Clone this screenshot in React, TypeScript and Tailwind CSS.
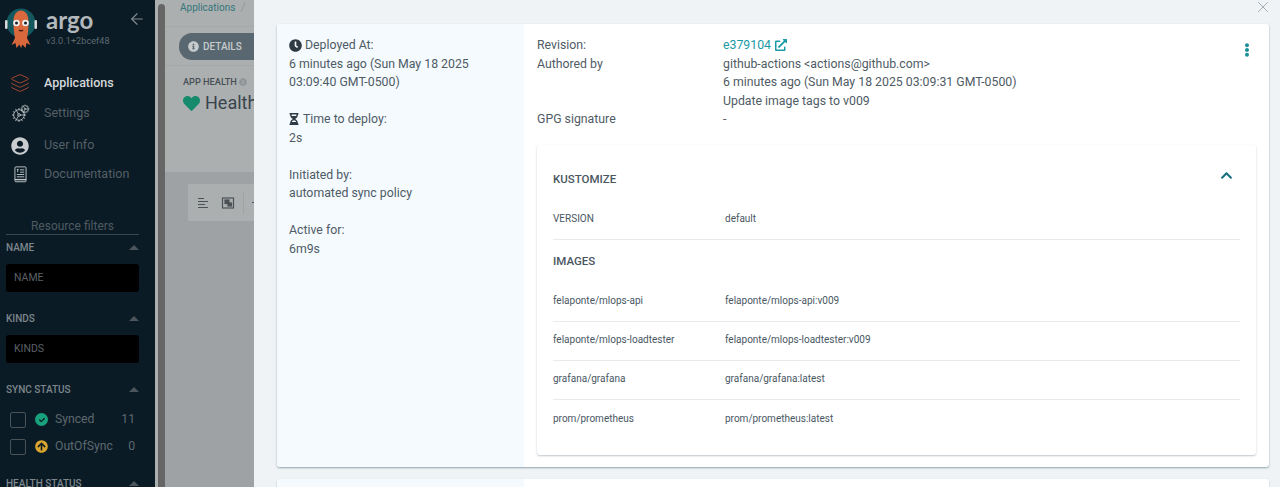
import { ArrowLeft, Cog, Layers, X } from 'lucide-react'
import {
  FaArrowCircleUp,
  FaCheck,
  FaChevronUp,
  FaClock,
  FaEllipsisV,
  FaExternalLinkAlt,
  FaHeart,
  FaHourglassHalf,
  FaInfoCircle,
  FaUserCircle,
} from 'react-icons/fa'

const images = [
  ['felaponte/mlops-api', 'felaponte/mlops-api:v009'],
  ['felaponte/mlops-loadtester', 'felaponte/mlops-loadtester:v009'],
  ['grafana/grafana', 'grafana/grafana:latest'],
  ['prom/prometheus', 'prom/prometheus:latest'],
]

function ArgoLogo() {
  return (
    <svg width="32" height="40" viewBox="0 0 32 40" className="shrink-0">
      <circle cx="16" cy="15" r="14.5" fill="#14585f" />
      <rect x="0" y="12" width="2.5" height="9" rx="1.2" fill="#d8d8d8" />
      <rect x="29.5" y="12" width="2.5" height="9" rx="1.2" fill="#d8d8d8" />
      <path d="M8.5 13c0-14 15-14 15 0 0 7-.5 13-1.500 17l3.500 7-4-2-1 5-3-3.500-1.500 3.500-1.500-3.500-3 3.500-1-5-4 2 3.500-7c-1-4-1.500-10-1.500-17Z" fill="#d9683c" />
      <circle cx="11.500" cy="15" r="3.300" fill="#efefef" />
      <circle cx="20.500" cy="15" r="3.300" fill="#efefef" />
      <circle cx="11.500" cy="15" r="1.500" fill="#222" />
      <circle cx="20.500" cy="15" r="1.500" fill="#222" />
      <path d="M14 22c1 1.200 3 1.200 4 0" stroke="#3a1a10" strokeWidth="1.200" fill="none" />
    </svg>
  )
}

function DocIcon() {
  return (
    <svg width="13" height="17" viewBox="0 0 14 18" fill="none" stroke="#c4c9cc" strokeWidth="1">
      <rect x="1" y="0.8" width="12" height="16" rx="1" />
      <path d="M3 3.500h2M4 3.500v3M6.500 4h4.500M6.500 6.500h4.500M3 9h8M3 11.500h8" />
      <path d="M1 14.500h12" strokeWidth="1.500" />
    </svg>
  )
}

function GearsIcon() {
  return (
    <span className="relative flex h-[18px] w-[18px]">
      <Cog size={16} strokeWidth={1.2} className="mt-[2px] text-[#c4c9cc]" />
      <Cog size={10} strokeWidth={1.4} className="absolute -right-[1px] -top-[1px] text-[#c4c9cc]" />
    </span>
  )
}

function NavItem({ icon, label, active, h }: { icon: React.ReactNode; label: string; active?: boolean; h: string }) {
  return (
    <div className={`flex items-center ${h}`}>
      <div className="mr-[4px] flex w-[40px] shrink-0 justify-center">{icon}</div>
      <span className={`text-[12.5px] ${active ? 'font-medium text-[#d5d8da]' : 'text-[#555f66]'}`}>{label}</span>
    </div>
  )
}

function FilterHead({ label }: { label: string }) {
  return (
    <div className="flex items-center justify-between pl-[6px] pr-[16px] text-[10px] font-medium text-[#7d868c]">
      <span>{label}</span>
      <span className="h-0 w-0 border-x-[5px] border-b-[5px] border-x-transparent border-b-[#4c555b]" />
    </div>
  )
}

function FilterInput({ label }: { label: string }) {
  return (
    <div className="ml-[6px] mt-[9px] flex h-[28px] w-[133px] items-center rounded-[3px] bg-black pl-[8px] text-[10.5px] text-[#5a6065]">
      {label}
    </div>
  )
}

function StatusRow({ icon, label, count }: { icon: React.ReactNode; label: string; count: string }) {
  return (
    <div className="flex h-[27px] items-center pl-[10px] pr-[20px] text-[12.2px] text-[#5e686e]">
      <span className="h-[16px] w-[16px] shrink-0 rounded-[2px] border border-[#4a5358]" />
      <span className="ml-[9px] flex w-[20px] shrink-0">{icon}</span>
      <span>{label}</span>
      <span className="ml-auto">{count}</span>
    </div>
  )
}

function Sidebar() {
  return (
    <aside className="flex h-full w-[155px] shrink-0 flex-col overflow-hidden bg-[#0a1b25]">
      <div className="flex h-[56px] shrink-0 pl-[5px] pr-[9px] pt-[8px]">
        <ArgoLogo />
        <div className="ml-[9px] flex flex-col">
          <span className="font-['Lato',sans-serif] text-[24px] font-bold leading-[24px] text-[#b3b8bb]">argo</span>
          <span className="mt-[3px] text-[9px] leading-[12px] tracking-[0.1px] text-[#5f696f]">v3.0.1+2bcef48</span>
        </div>
        <ArrowLeft size={18} strokeWidth={1.5} className="ml-auto mt-[2px] text-[#858a8e]" />
      </div>
      <div className="mt-[12px] flex flex-col">
        <NavItem h="h-[30px]" active label="Applications" icon={<Layers size={20} strokeWidth={1} className="text-[#c24f33]" />} />
        <NavItem h="h-[31px]" label="Settings" icon={<GearsIcon />} />
        <NavItem h="h-[33px]" label="User Info" icon={<FaUserCircle size={18} className="text-[#c9cdcf]" />} />
        <NavItem h="h-[24px]" label="Documentation" icon={<DocIcon />} />
      </div>
      <div className="ml-[6px] mr-[16px] mt-[32px] border-b border-[#3a454c] text-center text-[12px] leading-[16px] text-[#4f5a61]">
        Resource filters
      </div>
      <div className="mt-[5px]">
        <FilterHead label="NAME" />
        <FilterInput label="NAME" />
      </div>
      <div className="mt-[19px]">
        <FilterHead label="KINDS" />
        <FilterInput label="KINDS" />
      </div>
      <div className="mt-[19px]">
        <FilterHead label="SYNC STATUS" />
        <div className="mt-[9px]">
          <StatusRow
            label="Synced"
            count="11"
            icon={
              <span className="flex h-[13px] w-[13px] items-center justify-center rounded-full bg-[#18a27c]">
                <FaCheck size={6} className="text-[#0a1b25]" />
              </span>
            }
          />
          <StatusRow label="OutOfSync" count="0" icon={<FaArrowCircleUp size={13} className="text-[#d9a52e]" />} />
        </div>
      </div>
      <div className="mt-[16px]">
        <FilterHead label="HEALTH STATUS" />
      </div>
    </aside>
  )
}

// dimmed page behind the sliding panel
function Backdrop() {
  return (
    <div className="flex h-full w-[99px] shrink-0 overflow-hidden bg-[#acafb0]">
      <div className="ml-[3px] mt-[4px] h-full w-[7px] shrink-0 rounded-t-[4px] bg-[#666666]" />
      <div className="flex min-w-0 flex-1 flex-col">
        <div className="flex h-[27px] items-start gap-[5px] border-b border-[#a5a8a9] pl-[15px] pt-[1px] text-[10px] leading-[14px] text-[#33767b]">
          Applications <span className="-mt-[1px] text-[13px] font-light text-[#8b8f90]">/</span>
        </div>
        <div className="flex h-[39px] border-b border-[#a5a8a9] pl-[14px] pt-[6px]">
          <div className="flex h-[27px] w-[90px] shrink-0 items-center gap-[4px] rounded-l-[13px] bg-[#596770] pl-[9px] text-[10px] font-medium text-[#c6cbce]">
            <FaInfoCircle size={11} />
            DETAILS
          </div>
        </div>
        <div className="flex-1 pl-[18px] pt-[9px]">
          <div className="flex items-center gap-[2px] text-[9.2px] font-medium leading-[14px] text-[#474f55]">
            APP HEALTH
            <FaInfoCircle size={8} className="text-[#8f9496]" />
          </div>
          <div className="mt-[2px] flex items-center gap-[5px] whitespace-nowrap text-[18px] leading-[24px] text-[#38444d]">
            <FaHeart size={17} className="shrink-0 text-[#168a6c]" />
            Healthy
          </div>
        </div>
        <div className="h-[315px] shrink-0 bg-[#9ea2a4] pl-[23px] pt-[12px]">
          <div className="flex h-[37px] w-[90px] items-center bg-[#acafb0] pl-[9px]">
            <svg width="12" height="12" viewBox="0 0 12 12" stroke="#4b5257" strokeWidth="1.200">
              <path d="M1 1.500h6M1 4.500h10M1 7.500h7M1 10.500h10" />
            </svg>
            <svg width="14" height="12" viewBox="0 0 14 12" fill="none" stroke="#4b5257" strokeWidth="1.200" className="ml-[12px]">
              <rect x="1.500" y="1" width="11" height="10" />
              <rect x="4" y="3" width="4" height="3.500" fill="#4b5257" />
              <rect x="7" y="6" width="3.500" height="3" fill="#4b5257" />
            </svg>
            <span className="ml-[8px] h-[22px] border-l border-[#a0a3a4]" />
            <span className="ml-[8px] h-px w-[3px] bg-[#4b5257]" />
          </div>
        </div>
      </div>
    </div>
  )
}

function Row({ left, right, last }: { left: string; right: string; last?: boolean }) {
  return (
    <div className={`flex h-[39px] items-center text-[10px] text-[#495763] ${last ? '' : 'border-b border-[#e8ebed]'}`}>
      <span className="w-[172px] shrink-0">{left}</span>
      <span>{right}</span>
    </div>
  )
}

function DeployPanel() {
  return (
    <div className="flex h-full min-w-0 flex-1 flex-col overflow-hidden bg-[#eff3f5] pl-[23px] pr-[11px]">
      <div className="relative h-[24px] shrink-0">
        <X size={18} strokeWidth={1} className="absolute -right-[3px] -top-[2px] text-[#8d969b]" />
      </div>
      <div className="flex h-[443px] shrink-0 overflow-hidden rounded-[3px] bg-white text-[12.3px] leading-[18.5px] text-[#4f5b65] shadow-[0_1px_2px_rgba(70,100,115,0.55)]">
        <div className="w-[247px] shrink-0 bg-[#f4fafe] pl-[12px] pr-[20px] pt-[12px]">
          <div className="flex items-center gap-[3px]">
            <FaClock size={13} className="text-[#2f3a42]" />
            Deployed At:
          </div>
          <div>6 minutes ago (Sun May 18 2025 03:09:40 GMT-0500)</div>
          <div className="mt-[18.5px] flex items-center gap-[3px]">
            <FaHourglassHalf size={12} className="-ml-[1px] text-[#2f3a42]" />
            Time to deploy:
          </div>
          <div>2s</div>
          <div className="mt-[18.5px]">Initiated by:</div>
          <div>automated sync policy</div>
          <div className="mt-[18.5px]">Active for:</div>
          <div>6m9s</div>
        </div>
        <div className="min-w-0 flex-1 pl-[13px] pr-[13px] pt-[12px]">
          <div className="flex">
            <div className="w-[186px] shrink-0">
              <div>Revision:</div>
              <div>Authored by</div>
              <div className="mt-[37px]">GPG signature</div>
            </div>
            <div className="min-w-0 flex-1">
              <div className="flex items-center gap-[4px] text-[#1a9aa6]">
                e379104
                <FaExternalLinkAlt size={12} />
              </div>
              <div>github-actions &lt;actions@github.com&gt;</div>
              <div>6 minutes ago (Sun May 18 2025 03:09:31 GMT-0500)</div>
              <div>Update image tags to v009</div>
              <div>-</div>
            </div>
            <FaEllipsisV size={14} className="mr-[2px] mt-[7px] shrink-0 text-[#1a8f99]" />
          </div>
          <div className="mt-[16px] h-[310px] rounded-[3px] bg-white px-[16px] shadow-[0_1px_2px_rgba(70,90,105,0.35)]">
            <div className="flex h-[69px] items-center justify-between pr-[7px] text-[11.5px] font-medium text-[#4a565f]">
              KUSTOMIZE
              <FaChevronUp size={13} className="-mt-[8px] text-[#16707f]" />
            </div>
            <div className="-mt-[13px]">
              <Row left="VERSION" right="default" />
            </div>
            <div className="flex h-[43px] items-center text-[11.5px] font-medium text-[#4a565f]">IMAGES</div>
            <div>
              {images.map((img, i) => (
                <Row key={img[0]} left={img[0]} right={img[1]} last={i === images.length - 1} />
              ))}
            </div>
          </div>
        </div>
      </div>
      <div className="mt-[12px] flex h-[40px] shrink-0 overflow-hidden rounded-[3px] bg-white shadow-[0_1px_2px_rgba(70,100,115,0.4)]">
        <div className="w-[247px] shrink-0 bg-[#f4fafe]" />
      </div>
    </div>
  )
}

export default function App() {
  return (
    <div className="flex h-[487px] w-[1280px] overflow-hidden font-['Roboto',sans-serif]">
      <Sidebar />
      <Backdrop />
      <DeployPanel />
    </div>
  )
}
